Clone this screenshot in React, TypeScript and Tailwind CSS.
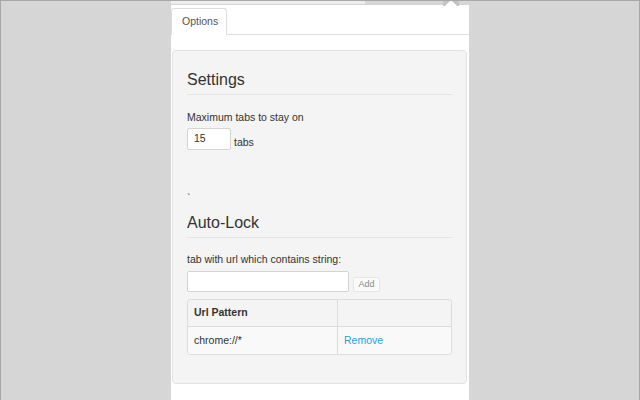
import React from "react";

export default function App() {
  return (
    <div
      className="w-[640px] h-[400px] bg-[#d6d6d6] border-l border-r border-t border-[#a8a8a8] flex flex-col overflow-hidden text-[#333]"
      style={{ fontFamily: '"Liberation Sans", Arial, sans-serif' }}
    >
      {/* top strip */}
      <div className="relative h-[4px] shrink-0 flex">
        <div className="ml-[170px] w-[194px] h-[3px] bg-[#ececec]" />
        <svg className="absolute left-[440px] top-[-1px]" width="20" height="6" viewBox="0 0 20 6">
          <path d="M2 0 L18 0 L18 6 L2 6 Z" fill="#c4c4c4" />
          <path d="M4 6 L10 0 L16 6 Z" fill="#ffffff" />
        </svg>
      </div>

      {/* popup */}
      <div className="ml-[170px] w-[298px] flex-1 bg-white flex flex-col">
        {/* tab bar */}
        <div className="flex pt-[3px]">
          <div className="h-[27px] w-[56px] border-t border-l border-r border-[#dedede] rounded-t-[3px] pl-[10px] flex items-center text-[10.5px] text-[#555]">
            Options
          </div>
          <div className="flex-1 border-b border-[#dedede]" />
        </div>

        {/* panel */}
        <div className="mt-[15px] ml-[1px] mr-[2px] bg-[#f4f4f4] border border-[#e2e2e2] rounded-[4px] pt-[19px] pl-[14px] pr-[14px] pb-[28px]">
          <div className="text-[16px] leading-[20px] pb-[4px] border-b border-[#e4e4e4] text-[#333]">
            Settings
          </div>
          <div className="mt-[14px] text-[10.5px] leading-[16px]">Maximum tabs to stay on</div>
          <div className="mt-[3px] flex items-end">
            <div className="w-[44px] h-[22px] bg-white border border-[#d4d4d4] rounded-[2px] pl-[6px] flex items-center text-[10.5px]">
              15
            </div>
            <span className="ml-[3px] text-[10.5px] leading-[16px]">tabs</span>
          </div>
          <div className="mt-[40px] text-[10.5px] leading-[16px]">`</div>

          <div className="mt-[7px] text-[16px] leading-[20px] pb-[4px] border-b border-[#e4e4e4] text-[#333]">
            Auto-Lock
          </div>
          <div className="mt-[13px] text-[10.5px] leading-[16px]">tab with url which contains string:</div>
          <div className="mt-[4px] flex items-end">
            <div className="w-[162px] h-[21px] bg-white border border-[#d4d4d4] rounded-[2px]" />
            <div className="ml-[4px] w-[27px] h-[15px] bg-[#fafafa] border border-[#e6e6e6] rounded-[2px] flex items-center justify-center text-[9px] text-[#8a8a8a]">
              Add
            </div>
          </div>

          <div className="mt-[7px] border border-[#dddddd] rounded-[3px] overflow-hidden text-[10.5px]">
            <div className="flex h-[27px] border-b border-[#dddddd]">
              <div className="w-[150px] border-r border-[#dddddd] pl-[6px] flex items-center font-bold">
                Url Pattern
              </div>
              <div className="flex-1" />
            </div>
            <div className="flex h-[27px] bg-[#f9f9f9]">
              <div className="w-[150px] border-r border-[#dddddd] pl-[6px] flex items-center">
                chrome://*
              </div>
              <div className="flex-1 pl-[6px] flex items-center text-[#2a9fd6]">Remove</div>
            </div>
          </div>
        </div>
      </div>
    </div>
  );
}
